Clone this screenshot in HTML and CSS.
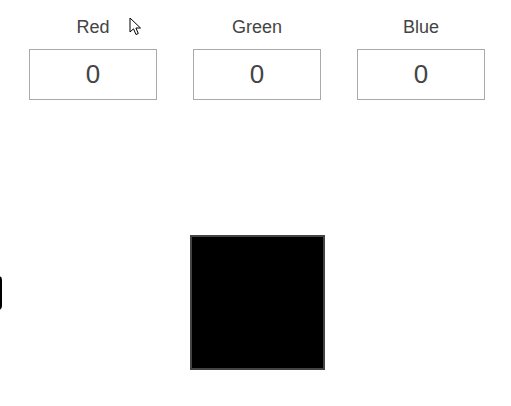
FILE: index.html
```html
<!DOCTYPE html>
<html>
<head>
<meta charset="utf-8">
<link rel="stylesheet" href="styles.css">
</head>
<body>
<div class="page">
  <div class="controls">
    <div class="field">
      <label class="label">Red</label>
      <input class="num" type="text" value="0">
    </div>
    <div class="field">
      <label class="label">Green</label>
      <input class="num" type="text" value="0">
    </div>
    <div class="field">
      <label class="label">Blue</label>
      <input class="num" type="text" value="0">
    </div>
  </div>
  <div class="preview-wrap">
    <div class="swatch"></div>
  </div>
  <div class="side-tab"></div>
  <svg class="cursor" width="14" height="20" viewBox="0 0 14 20">
    <path d="M1 1 L1 15 L4.5 11.8 L7 17.5 L9.3 16.5 L6.9 11 L11.5 11 Z" fill="#fff" stroke="#000" stroke-width="1" stroke-linejoin="round"/>
  </svg>
</div>
</body>
</html>
```

FILE: styles.css
```css
html, body {
  margin: 0;
  padding: 0;
  background: #fff;
}
.page {
  position: relative;
  width: 511px;
  height: 406px;
  overflow: hidden;
  font-family: "Liberation Sans", Arial, sans-serif;
  color: #444;
}
.controls {
  display: grid;
  grid-template-columns: repeat(3, 164px);
  padding: 17px 0 0 11px;
}
.field {
  display: flex;
  flex-direction: column;
  align-items: center;
  gap: 11px;
}
.label {
  font-size: 18px;
  line-height: 21px;
  color: #444;
}
.num {
  box-sizing: border-box;
  width: 128px;
  height: 51px;
  border: 1px solid #aaa;
  border-radius: 0;
  padding: 0;
  margin: 0;
  text-align: center;
  font-family: "Liberation Sans", Arial, sans-serif;
  font-size: 26px;
  color: #444;
  background: #fff;
  outline: none;
}
.preview-wrap {
  display: flex;
  justify-content: center;
  padding: 135px 0 0 3px;
  width: 508px;
}
.swatch {
  box-sizing: border-box;
  width: 135px;
  height: 135px;
  background: #000;
  border: 2px solid #444;
}
.side-tab {
  position: absolute;
  left: -40px;
  top: 276px;
  width: 42px;
  height: 34px;
  background: #000;
  border-radius: 4px;
}
.cursor {
  position: absolute;
  left: 129px;
  top: 17px;
}
```
